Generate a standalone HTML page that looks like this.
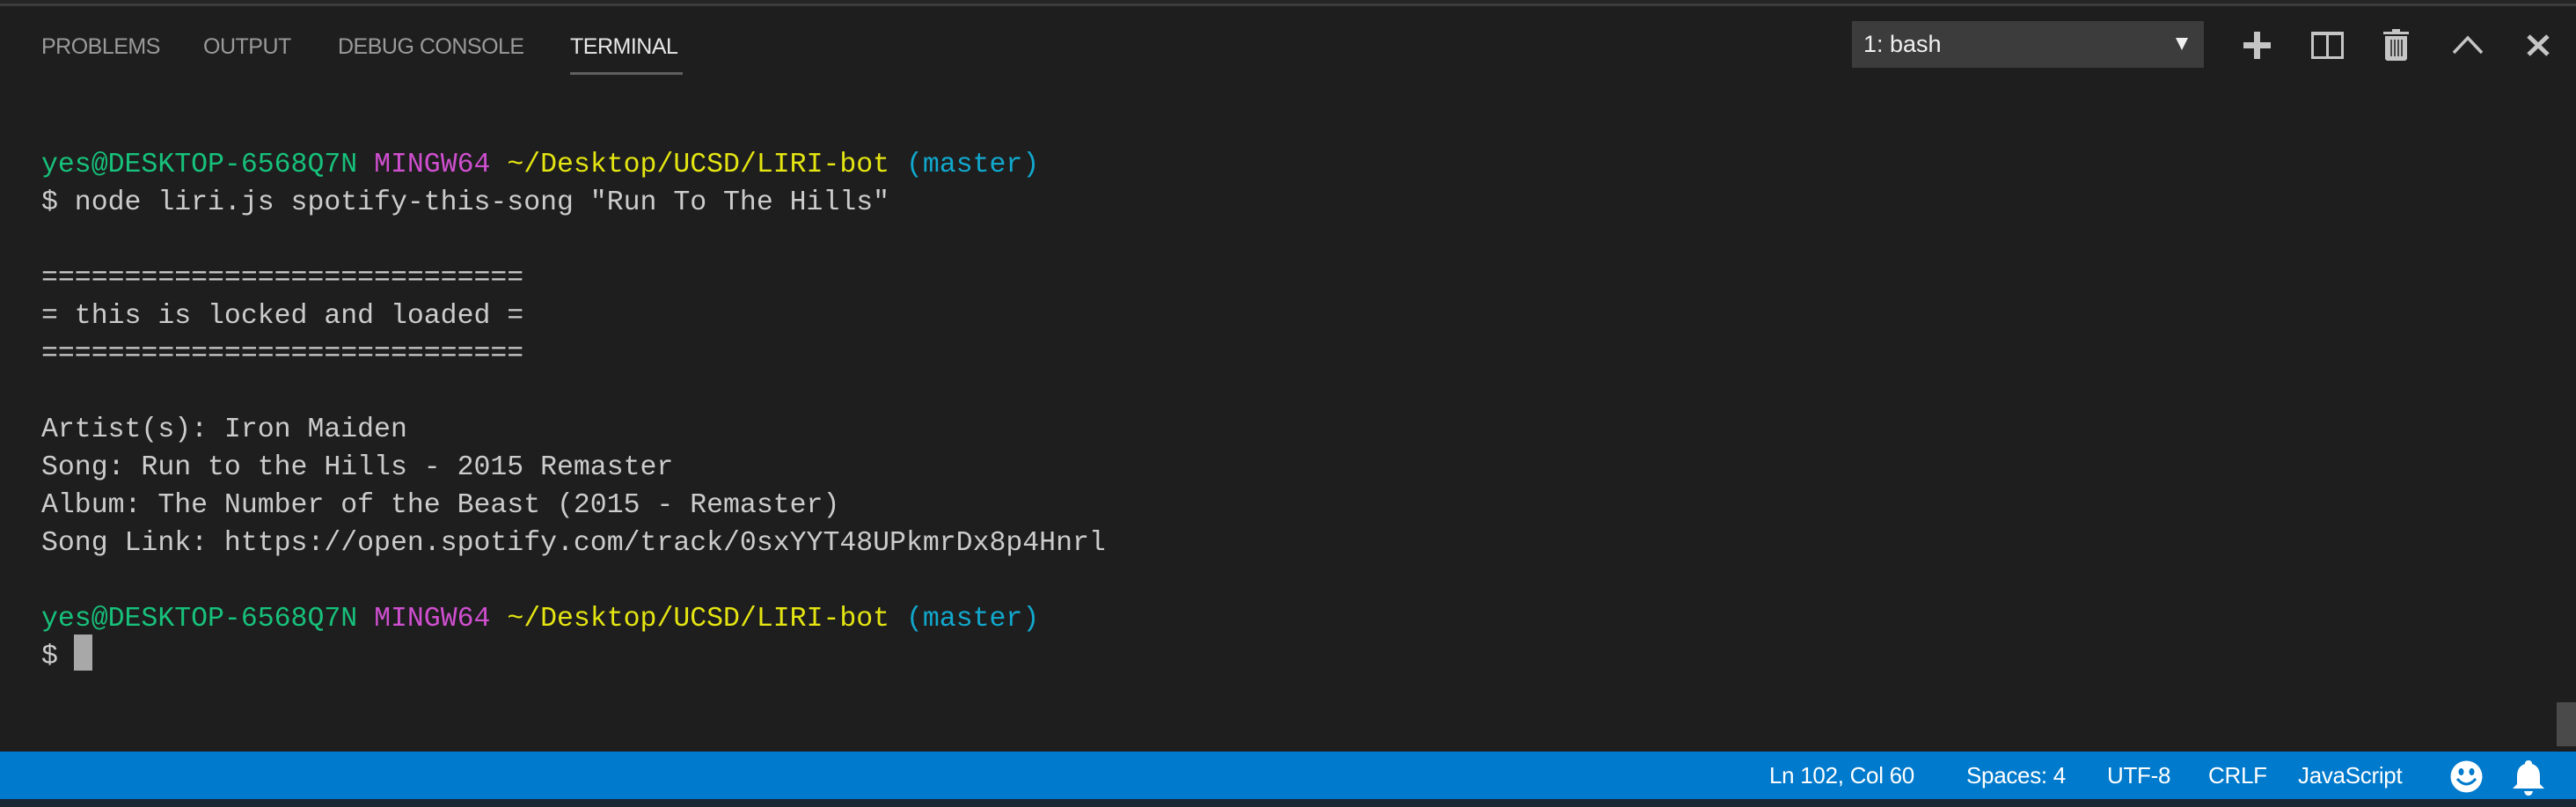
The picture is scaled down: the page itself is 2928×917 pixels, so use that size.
<!DOCTYPE html>
<html><head><meta charset="utf-8"><style>
html,body{margin:0;padding:0;width:2928px;height:917px;overflow:hidden;background:#1e1e1e;position:relative;font-family:"Liberation Sans",sans-serif}
.abs{position:absolute}
.tab{position:absolute;top:39px;font-size:25px;color:#9a9a9a;letter-spacing:-0.5px;white-space:nowrap}
.term{position:absolute;left:47px;font-family:"Liberation Mono",monospace;font-size:31.5px;color:#cccccc;white-space:pre;line-height:43px}
.g{color:#17c17b}.m{color:#cf4fcf}.y{color:#e5e512}.c{color:#11a8cd}
.st{position:absolute;top:866px;font-size:26px;color:#fff;white-space:nowrap;letter-spacing:-0.3px}
</style></head><body>
<div class="abs" style="left:0;top:0;width:2928px;height:4px;background:#252526"></div>
<div class="abs" style="left:0;top:4px;width:2928px;height:3px;background:#3c3c3c"></div>

<div class="tab" style="left:47px">PROBLEMS</div>
<div class="tab" style="left:231px">OUTPUT</div>
<div class="tab" style="left:384px">DEBUG CONSOLE</div>
<div class="tab" style="left:648px;color:#e7e7e7">TERMINAL</div>
<div class="abs" style="left:648px;top:82px;width:128px;height:3px;background:#5f5f5f"></div>

<div class="abs" style="left:2105px;top:24px;width:400px;height:53px;background:#3c3c3c"></div>
<div class="abs" style="left:2118px;top:35px;font-size:27px;color:#f0f0f0">1: bash</div>
<svg class="abs" style="left:2472px;top:42px" width="16" height="16"><path d="M1 1 L15 1 L8 15 Z" fill="#f0f0f0"/></svg>
<svg class="abs" style="left:2550px;top:36px" width="31" height="31"><path d="M12 0h7v12h12v7H19v12h-7V19H0v-7h12z" fill="#c5c5c5"/></svg>
<svg class="abs" style="left:2627px;top:36px" width="37" height="31"><path d="M0 0h37v31H0z M3 4v24h14V4z M20 4v24h14V4z" fill="#c5c5c5" fill-rule="evenodd"/></svg>
<svg class="abs" style="left:2709px;top:33px" width="29" height="36"><path d="M10 0h9v3h10v3H0V3h10z M2 8h25v26l-2 2H4l-2-2z" fill="#c5c5c5"/><path d="M9 12v19M13 12v19M17 12v19M21 12v19" stroke="#1e1e1e" stroke-width="1.5"/></svg>
<svg class="abs" style="left:2787px;top:40px" width="36" height="22"><path d="M2 20 L18 3 L34 20" stroke="#c5c5c5" stroke-width="3.5" fill="none"/></svg>
<svg class="abs" style="left:2871px;top:39px" width="28" height="25"><path d="M3 2 L25 23 M25 2 L3 23" stroke="#c5c5c5" stroke-width="5" fill="none"/></svg>

<div class="term" style="top:166px"><span class="g">yes@DESKTOP-6568Q7N</span> <span class="m">MINGW64</span> <span class="y">~/Desktop/UCSD/LIRI-bot</span> <span class="c">(master)</span>
$ node liri.js spotify-this-song "Run To The Hills"

=============================
= this is locked and loaded =
=============================

Artist(s): Iron Maiden
Song: Run to the Hills - 2015 Remaster
Album: The Number of the Beast (2015 - Remaster)
Song Link: https://open.spotify.com/track/0sxYYT48UPkmrDx8p4Hnrl

<span class="g">yes@DESKTOP-6568Q7N</span> <span class="m">MINGW64</span> <span class="y">~/Desktop/UCSD/LIRI-bot</span> <span class="c">(master)</span>
$ </div>
<div class="abs" style="left:84px;top:721px;width:21px;height:41px;background:#a8a8a8"></div>

<div class="abs" style="left:2906px;top:798px;width:22px;height:50px;background:#4a4a4a"></div>

<div class="abs" style="left:0;top:854px;width:2928px;height:54px;background:#007acc"></div>
<div class="abs" style="left:0;top:908px;width:2928px;height:9px;background:#1b2733"></div>
<div class="st" style="left:2011px">Ln 102, Col 60</div>
<div class="st" style="left:2235px">Spaces: 4</div>
<div class="st" style="left:2395px">UTF-8</div>
<div class="st" style="left:2510px">CRLF</div>
<div class="st" style="left:2612px">JavaScript</div>
<svg class="abs" style="left:2785px;top:864px" width="37" height="37"><circle cx="18.5" cy="18.5" r="18" fill="#fff"/><ellipse cx="12.5" cy="13" rx="3" ry="4" fill="#007acc"/><ellipse cx="24.5" cy="13" rx="3" ry="4" fill="#007acc"/><path d="M8 21 Q18.5 33 29 21" stroke="#007acc" stroke-width="3" fill="none"/></svg>
<svg class="abs" style="left:2856px;top:864px" width="36" height="40"><path d="M18 0 Q22 0 22 4 Q31 7 31 18 L31 27 L36 32 L0 32 L5 27 L5 18 Q5 7 14 4 Q14 0 18 0Z M13 35 h10 Q22 40 18 40 Q14 40 13 35Z" fill="#fff"/></svg>
</body></html>
